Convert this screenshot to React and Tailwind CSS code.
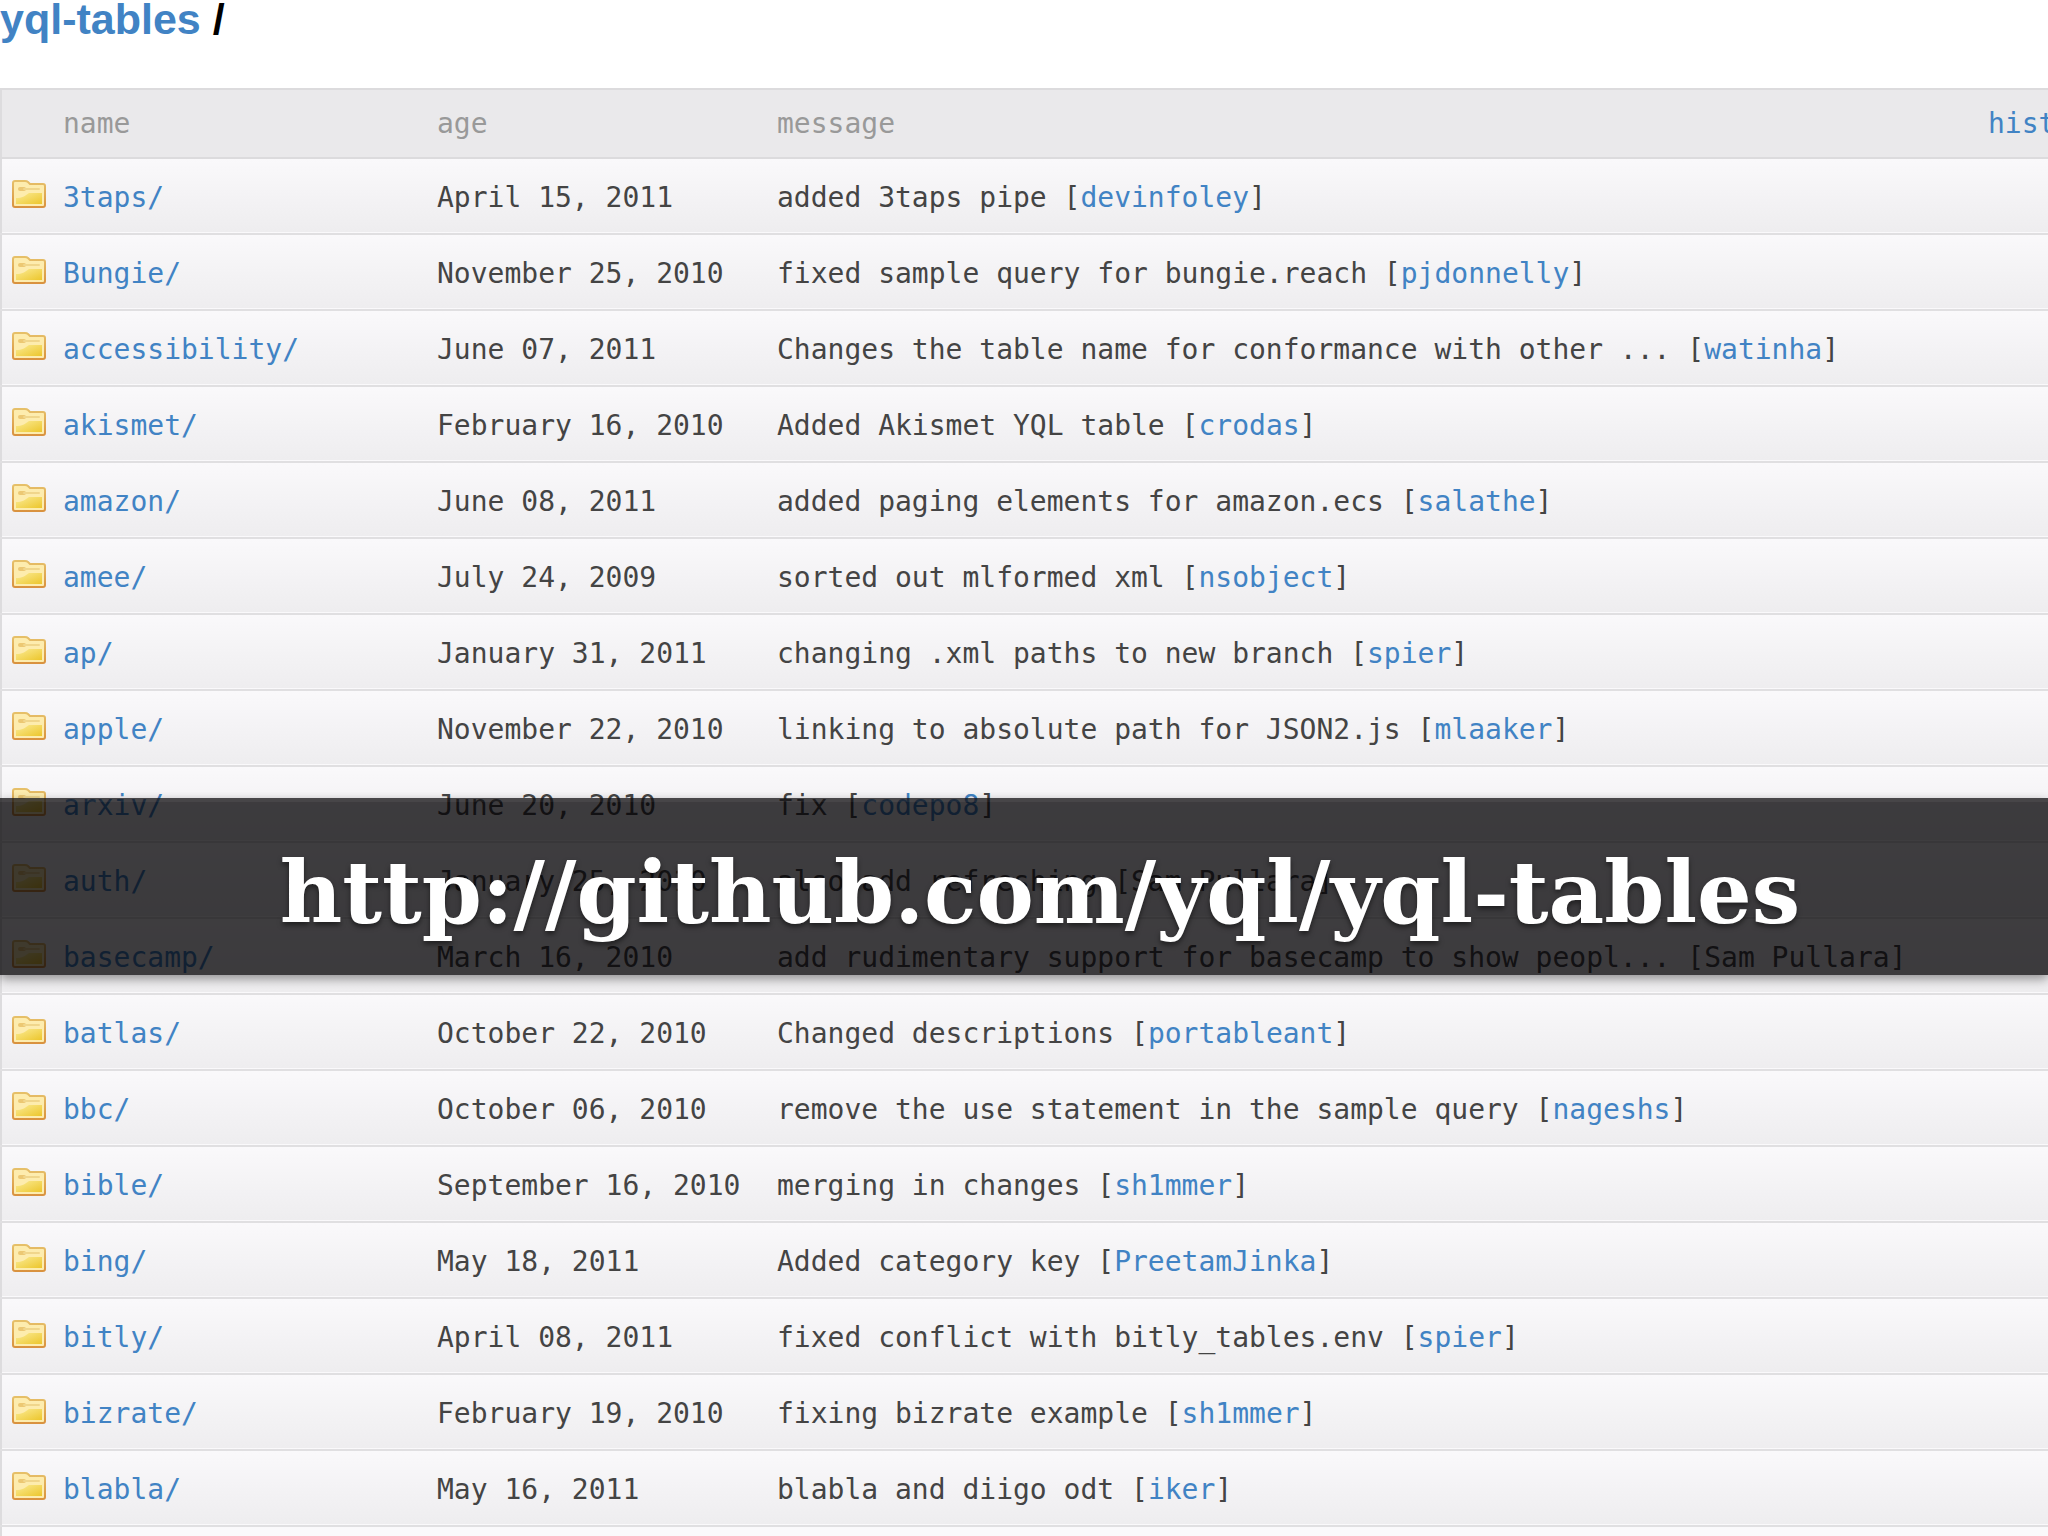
import React from 'react';

const entries = [
  { name: '3taps', age: 'April 15, 2011', message: 'added 3taps pipe', author: 'devinfoley' },
  { name: 'Bungie', age: 'November 25, 2010', message: 'fixed sample query for bungie.reach', author: 'pjdonnelly' },
  { name: 'accessibility', age: 'June 07, 2011', message: 'Changes the table name for conformance with other ...', author: 'watinha' },
  { name: 'akismet', age: 'February 16, 2010', message: 'Added Akismet YQL table', author: 'crodas' },
  { name: 'amazon', age: 'June 08, 2011', message: 'added paging elements for amazon.ecs', author: 'salathe' },
  { name: 'amee', age: 'July 24, 2009', message: 'sorted out mlformed xml', author: 'nsobject' },
  { name: 'ap', age: 'January 31, 2011', message: 'changing .xml paths to new branch', author: 'spier' },
  { name: 'apple', age: 'November 22, 2010', message: 'linking to absolute path for JSON2.js', author: 'mlaaker' },
  { name: 'arxiv', age: 'June 20, 2010', message: 'fix', author: 'codepo8' },
  { name: 'auth', age: 'January 25, 2010', message: 'also add refreshing', author: 'Sam Pullara', plain: true },
  { name: 'basecamp', age: 'March 16, 2010', message: 'add rudimentary support for basecamp to show peopl...', author: 'Sam Pullara', plain: true },
  { name: 'batlas', age: 'October 22, 2010', message: 'Changed descriptions', author: 'portableant' },
  { name: 'bbc', age: 'October 06, 2010', message: 'remove the use statement in the sample query', author: 'nageshs' },
  { name: 'bible', age: 'September 16, 2010', message: 'merging in changes', author: 'sh1mmer' },
  { name: 'bing', age: 'May 18, 2011', message: 'Added category key', author: 'PreetamJinka' },
  { name: 'bitly', age: 'April 08, 2011', message: 'fixed conflict with bitly_tables.env', author: 'spier' },
  { name: 'bizrate', age: 'February 19, 2010', message: 'fixing bizrate example', author: 'sh1mmer' },
  { name: 'blabla', age: 'May 16, 2011', message: 'blabla and diigo odt', author: 'iker' },
];

const FolderIcon = () => (
  <svg width="34" height="28" viewBox="0 0 34 28" aria-hidden="true">
    <defs>
      <linearGradient id="folder-front" x1="0" y1="0" x2="1" y2="1">
        <stop offset="0" stopColor="#fbeb94" />
        <stop offset="1" stopColor="#ecc62c" />
      </linearGradient>
      <linearGradient id="folder-edge" x1="0" y1="0" x2="0" y2="1">
        <stop offset="0" stopColor="#e6c069" />
        <stop offset="1" stopColor="#d9923f" />
      </linearGradient>
    </defs>
    <path
      d="M1 3Q1 1 3 1H13Q15 1 16 2L18 4H31Q33 4 33 6V25Q33 27 31 27H3Q1 27 1 25Z"
      fill="#fdecae"
      stroke="url(#folder-edge)"
      strokeWidth="2"
    />
    <path d="M4 18C10 18 13 16 17 13H30V24H4Z" fill="url(#folder-front)" />
    <path d="M8 9H12" stroke="#ecc873" strokeWidth="4" strokeLinecap="round" />
    <path d="M12 9H27" stroke="#f0d68c" strokeWidth="2" strokeLinecap="round" />
  </svg>
);

const FileRow = ({ entry }) => (
  <tr className="h-[76px] border-b-2 border-[#e0dfe1] bg-linear-to-b from-[#faf9fb] to-[#eeedef]">
    <td className="pl-2.5 pb-1">
      <FolderIcon />
    </td>
    <td className="pt-1">
      <a href={`#${entry.name}`} className="text-[#4183c4]">{entry.name}/</a>
    </td>
    <td className="pt-1">{entry.age}</td>
    <td colSpan={2} className="pt-1 whitespace-nowrap">
      {entry.message} [
      {entry.plain ? entry.author : <a href={`#${entry.author}`} className="text-[#4183c4]">{entry.author}</a>}
      ]
    </td>
  </tr>
);

const Banner = () => (
  <div className="absolute inset-x-0 top-[798px] h-[177px] flex items-center justify-center pl-8 pt-2 bg-[#030104]/76 border-t-4 border-white/5 shadow-[0_4px_10px_rgba(0,0,0,0.4)]">
    <p className="font-['DejaVu_Serif',serif] font-bold text-[86px] leading-none text-white whitespace-nowrap [text-shadow:0_3px_5px_rgba(0,0,0,0.5)]">
      http://github.com/yql/yql-tables
    </p>
  </div>
);

export default function App() {
  return (
    <div className="relative min-h-screen flex flex-col overflow-hidden bg-white">
      <h1 className="h-[88px] font-['Liberation_Sans',Arial,sans-serif] font-bold text-[43px] leading-[38px] text-black">
        <a href="#yql-tables" className="text-[#4183c4]">yql-tables</a> /
      </h1>

      {/* The table runs past the right edge, so the history link is cut off */}
      <table className="w-[calc(100%+72px)] table-fixed border-collapse border-l-2 border-[#dddcde] font-['DejaVu_Sans_Mono',monospace] text-[28px] leading-9 text-[#444] text-left">
        <colgroup>
          <col className="w-[62px]" />
          <col className="w-[374px]" />
          <col className="w-[340px]" />
          <col />
          <col className="w-[132px]" />
        </colgroup>
        <thead>
          <tr className="h-[69px] border-y-2 border-[#dcdbdd] bg-[#eae9eb] text-[#999]">
            <td />
            <th className="font-normal">name</th>
            <th className="font-normal">age</th>
            <th className="font-normal">message</th>
            <th className="font-normal">
              <a href="#history" className="text-[#4183c4]">history</a>
            </th>
          </tr>
        </thead>
        <tbody>
          {entries.map((entry) => (
            <FileRow key={entry.name} entry={entry} />
          ))}
        </tbody>
      </table>
      <div className="flex-1 border-l-2 border-[#dddcde] bg-[#faf9fb]" />

      <Banner />
    </div>
  );
}
